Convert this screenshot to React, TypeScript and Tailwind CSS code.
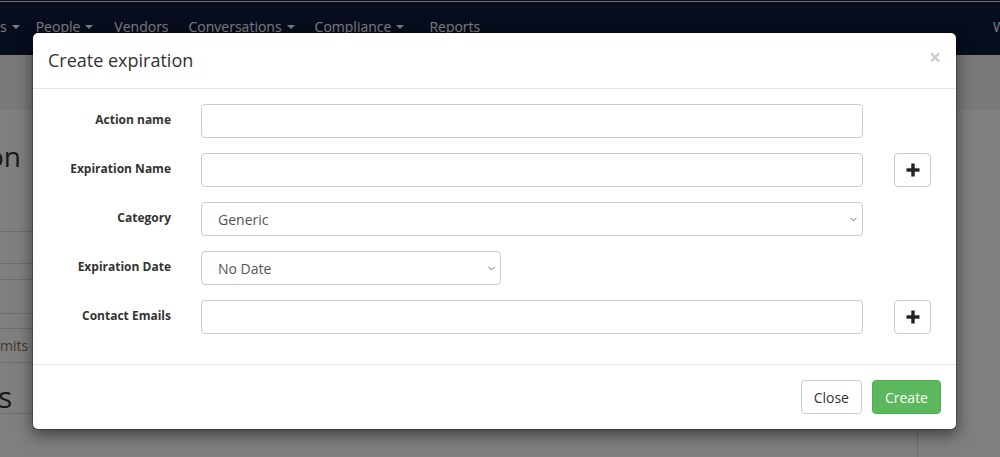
import { ChevronDown } from 'lucide-react';

function Caret() {
    return <span className="ml-[5px] inline-block h-0 w-0 border-x-[4px] border-t-[4px] border-x-transparent border-t-current align-middle" />;
}

function Plus() {
    return (
        <svg width="14" height="14" viewBox="0 0 14 14">
            <rect x="5.3" y="0.5" width="3.4" height="13" fill="#222" />
            <rect x="0.5" y="5.3" width="13" height="3.4" fill="#222" />
        </svg>
    );
}

function Row({ label, children, plus }: { label: string; children: any; plus?: boolean }) {
    return (
        <div className="mb-[15px] flex">
            <label className="w-[153px] shrink-0 px-[15px] pt-[7px] text-right text-[12px] font-bold leading-[17px] text-[#333]">{label}</label>
            <div className="w-[692px] shrink-0 px-[15px]">{children}</div>
            {plus && (
                <div className="w-[77px] shrink-0 pl-[16px]">
                    <button className="flex h-[34px] w-[37px] items-center justify-center rounded-[4px] border border-[#ccc] bg-white">
                        <Plus />
                    </button>
                </div>
            )}
        </div>
    );
}

function Select({ value, width }: { value: string; width: string }) {
    return (
        <div className={'relative ' + width}>
            <select className="h-[34px] w-full appearance-none rounded-[4px] border border-[#ccc] bg-white pl-[16px] text-[14px] text-[#555] outline-none" defaultValue={value}>
                <option>{value}</option>
            </select>
            <ChevronDown className="pointer-events-none absolute right-[4px] top-[12px] text-[#666]" size={11} strokeWidth={2} />
        </div>
    );
}

export default function App() {
    const nav = [
        { t: 's', c: true, ml: 'ml-0' },
        { t: 'People', c: true, ml: 'ml-[16px]' },
        { t: 'Vendors', c: false, ml: 'ml-[21px]' },
        { t: 'Conversations', c: true, ml: 'ml-[20px]' },
        { t: 'Compliance', c: true, ml: 'ml-[20px]' },
        { t: 'Reports', c: false, ml: 'ml-[25px]' },
    ];
    return (
        <div className="relative h-[457px] w-[1000px] overflow-hidden bg-white font-['Open_Sans',sans-serif]">
            {/* page behind the modal */}
            <div className="h-[1px] bg-[#0e1a3a]" />
            <div className="h-[1px] bg-[#e4e8f0]" />
            <div className="flex h-[53px] items-center bg-[#0e1a3a] pb-[4px] text-[14px] text-[#fbfcff]">
                {nav.map((n) => (
                    <span key={n.t} className={'flex items-center ' + n.ml}>
                        {n.t}
                        {n.c && <Caret />}
                    </span>
                ))}
                <span className="ml-auto mr-[-6px]">W</span>
            </div>
            <div className="h-[55px] bg-[#f5f5f5]" />
            <div className="flex">
                <div className="ml-[-25px] w-[320px] shrink-0">
                    <h1 className="mt-[28px] pl-[12px] text-[28px] leading-[36px] text-[#333]">on</h1>
                    <div className="mt-[57px] h-[33px] border-y border-[#ddd]" />
                    <div className="mt-[15px] h-[35px] border-y border-[#ddd]" />
                    <div className="mt-[14px] flex h-[35px] items-center border-y border-[#ddd] pl-[18px] text-[14px] text-[#8a6f55]">limits</div>
                    <h2 className="mt-[17px] border-b border-[#ddd] pl-[23px] text-[30px] leading-[33px] text-[#333]">s</h2>
                </div>
                <div className="ml-[622px] h-[400px] w-[100px] shrink-0 border-l border-[#ddd]" />
            </div>

            {/* backdrop */}
            <div className="absolute inset-0 bg-black/50" />

            {/* modal */}
            <div className="absolute left-[32px] top-[32px] w-[925px] rounded-[6px] border border-black/20 bg-white bg-clip-padding shadow-[0_5px_15px_rgba(0,0,0,0.5)]">
                <div className="flex items-center justify-between border-b border-[#e5e5e5] px-[15px] pb-[15px] pt-[14px]">
                    <h4 className="text-[18px] leading-[26px] text-[#333]">Create expiration</h4>
                    <button className="mt-[-6px] text-[21px] font-bold leading-none text-black opacity-20">×</button>
                </div>
                <div className="py-[15px]">
                    <Row label="Action name">
                        <input className="h-[34px] w-full rounded-[4px] border border-[#ccc] outline-none" />
                    </Row>
                    <Row label="Expiration Name" plus>
                        <input className="h-[34px] w-full rounded-[4px] border border-[#ccc] outline-none" />
                    </Row>
                    <Row label="Category">
                        <Select value="Generic" width="w-full" />
                    </Row>
                    <Row label="Expiration Date">
                        <Select value="No Date" width="w-[300px]" />
                    </Row>
                    <Row label="Contact Emails" plus>
                        <input className="h-[34px] w-full rounded-[4px] border border-[#ccc] outline-none" />
                    </Row>
                </div>
                <div className="flex justify-end gap-[10px] border-t border-[#e5e5e5] p-[15px]">
                    <button className="h-[34px] rounded-[4px] border border-[#ccc] bg-white px-[12px] text-[14px] text-[#333]">Close</button>
                    <button className="h-[34px] rounded-[4px] border border-[#4cae4c] bg-[#5cb85c] px-[12px] text-[14px] text-white">Create</button>
                </div>
            </div>
        </div>
    );
}
